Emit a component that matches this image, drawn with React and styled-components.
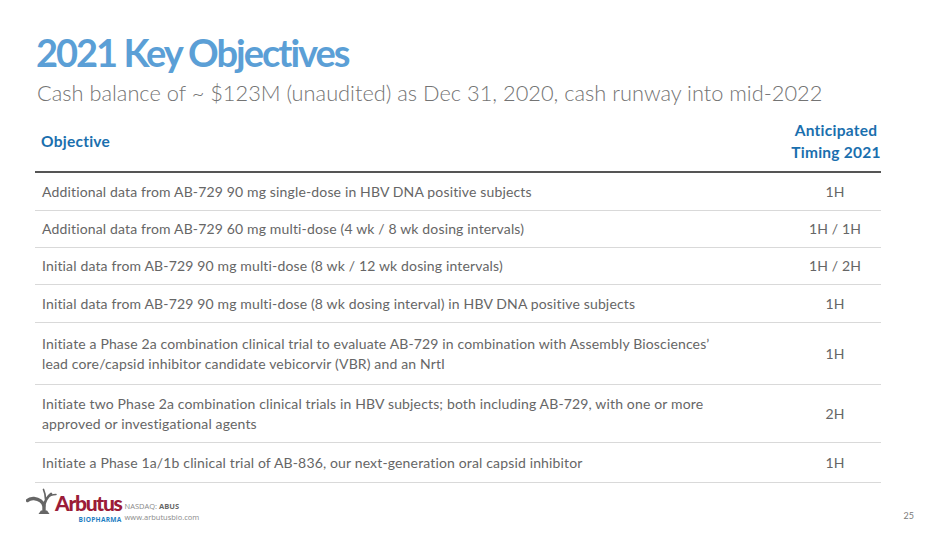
import styled, { createGlobalStyle } from "styled-components";

const Global = createGlobalStyle`
  html, body {
    margin: 0;
    padding: 0;
    background: #ffffff;
  }
  body {
    font-family: Lato, "Open Sans", sans-serif;
  }
`;

const Slide = styled.div`
  width: 950px;
  height: 534px;
  box-sizing: border-box;
  padding: 28px 69px 0 35px;
  display: flex;
  flex-direction: column;
  position: relative;
  overflow: hidden;
`;

const Title = styled.h1`
  margin: 0 0 0 1px;
  font-size: 38px;
  line-height: 48px;
  font-weight: 700;
  letter-spacing: -2px;
  color: #5b9fd6;
`;

const Subtitle = styled.h2`
  margin: 3px 0 0 2px;
  font-size: 21.8px;
  line-height: 28px;
  font-weight: 300;
  color: #747474;
`;

const Table = styled.div`
  margin-top: 4px;
  display: flex;
  flex-direction: column;
`;

const HeaderRow = styled.div`
  display: flex;
  align-items: center;
  padding: 8px 0 8px;
  border-bottom: 2px solid #555555;
`;

const HeadCell = styled.div`
  font-size: 15.5px;
  line-height: 22px;
  font-weight: 700;
  letter-spacing: 0.25px;
  color: #1a6fae;
  ${(p) =>
    p.$timing
      ? `width: 96px; text-align: center; flex: none; margin-right: -3px;`
      : `flex: 1; padding-left: 6px;`}
`;

const Row = styled.div`
  display: flex;
  align-items: center;
  padding: ${(p) => p.$pad || 9}px 0;
  border-bottom: 1px solid #d9d9d9;
`;

const Cell = styled.div`
  font-size: 14px;
  line-height: 20px;
  letter-spacing: 0.15px;
  color: #666666;
  ${(p) =>
    p.$timing
      ? `width: 92px; text-align: center; flex: none;`
      : `flex: 1; padding-left: 7px; padding-right: 70px;`}
`;

const Footer = styled.div`
  position: absolute;
  left: 26px;
  right: 36px;
  bottom: 11px;
  display: flex;
  align-items: flex-end;
`;

const Logo = styled.div`
  display: flex;
  align-items: flex-end;
`;

const Mark = styled.svg`
  margin-bottom: 8px;
  flex: none;
`;

const Wordmark = styled.div`
  display: flex;
  flex-direction: column;
  align-items: flex-end;
  margin-left: -4px;
  margin-bottom: -1px;
`;

const Brand = styled.span`
  font-family: Lato, sans-serif;
  font-size: 21px;
  line-height: 25px;
  font-weight: 900;
  letter-spacing: -1.3px;
  color: #9b1c38;
`;

const Pharma = styled.span`
  font-family: "Open Sans", sans-serif;
  font-size: 6.6px;
  line-height: 9px;
  font-weight: 700;
  letter-spacing: 0.25px;
  color: #1f7fc4;
`;

const Meta = styled.div`
  margin-left: 3px;
  display: flex;
  flex-direction: column;
  font-family: "Open Sans", sans-serif;
  font-size: 7.5px;
  line-height: 11px;
  color: #8a8a8a;
  b {
    color: #666666;
    font-weight: 700;
  }
`;

const PageNum = styled.div`
  margin-left: auto;
  font-size: 9px;
  color: #7a7a7a;
  margin-bottom: 2px;
`;

const rows = [
  ["Additional data from AB-729 90 mg single-dose in HBV DNA positive subjects", "1H", 8.5],
  ["Additional data from AB-729 60 mg multi-dose (4 wk / 8 wk dosing intervals)", "1H / 1H", 8],
  ["Initial data from AB-729 90 mg multi-dose (8 wk / 12 wk dosing intervals)", "1H / 2H", 8],
  ["Initial data from AB-729 90 mg multi-dose (8 wk dosing interval) in HBV DNA positive subjects", "1H", 8.5],
  [
    "Initiate a Phase 2a combination clinical trial to evaluate AB-729 in combination with Assembly Biosciences’ lead core/capsid inhibitor candidate vebicorvir (VBR) and an NrtI",
    "1H",
    10.5,
  ],
  [
    "Initiate two Phase 2a combination clinical trials in HBV subjects; both including AB-729, with one or more approved or investigational agents",
    "2H",
    8.5,
  ],
  ["Initiate a Phase 1a/1b clinical trial of AB-836, our next-generation oral capsid inhibitor", "1H", 9.5],
];

const TreeMark = () => (
  <Mark width="33" height="27" viewBox="0 0 33 27">
    <g fill="none" stroke="#666666" strokeLinecap="round">
      <path d="M18 24 L18 18 C17 14 13 11 8 10.5 C5 10.3 3 11 1.5 12.5" strokeWidth="3.4" />
      <path d="M18 18 C19 13 21 9 25 6" strokeWidth="2.8" />
      <path d="M19.5 11 C19.5 8 19 5 17.5 1.5" strokeWidth="1.7" />
      <path d="M21.5 9.5 C23.5 7.5 26.5 6.5 30 6.5" strokeWidth="1.5" />
    </g>
    <path d="M12.5 26 L23.5 26 L21 22.5 L15 22.5 Z" fill="#666666" />
  </Mark>
);

export default function App() {
  return (
    <>
      <Global />
      <Slide>
        <Title>2021 Key Objectives</Title>
        <Subtitle>
          Cash balance of ~ $123M (unaudited) as Dec 31, 2020, cash runway into mid-2022
        </Subtitle>
        <Table>
          <HeaderRow>
            <HeadCell>Objective</HeadCell>
            <HeadCell $timing>
              Anticipated
              <br />
              Timing 2021
            </HeadCell>
          </HeaderRow>
          {rows.map(([text, timing, pad]) => (
            <Row key={text} $pad={pad}>
              <Cell>{text}</Cell>
              <Cell $timing>{timing}</Cell>
            </Row>
          ))}
        </Table>
        <Footer>
          <Logo>
            <TreeMark />
            <Wordmark>
              <Brand>Arbutus</Brand>
              <Pharma>BIOPHARMA</Pharma>
            </Wordmark>
          </Logo>
          <Meta>
            <span>
              NASDAQ: <b>ABUS</b>
            </span>
            <span>www.arbutusbio.com</span>
          </Meta>
          <PageNum>25</PageNum>
        </Footer>
      </Slide>
    </>
  );
}
